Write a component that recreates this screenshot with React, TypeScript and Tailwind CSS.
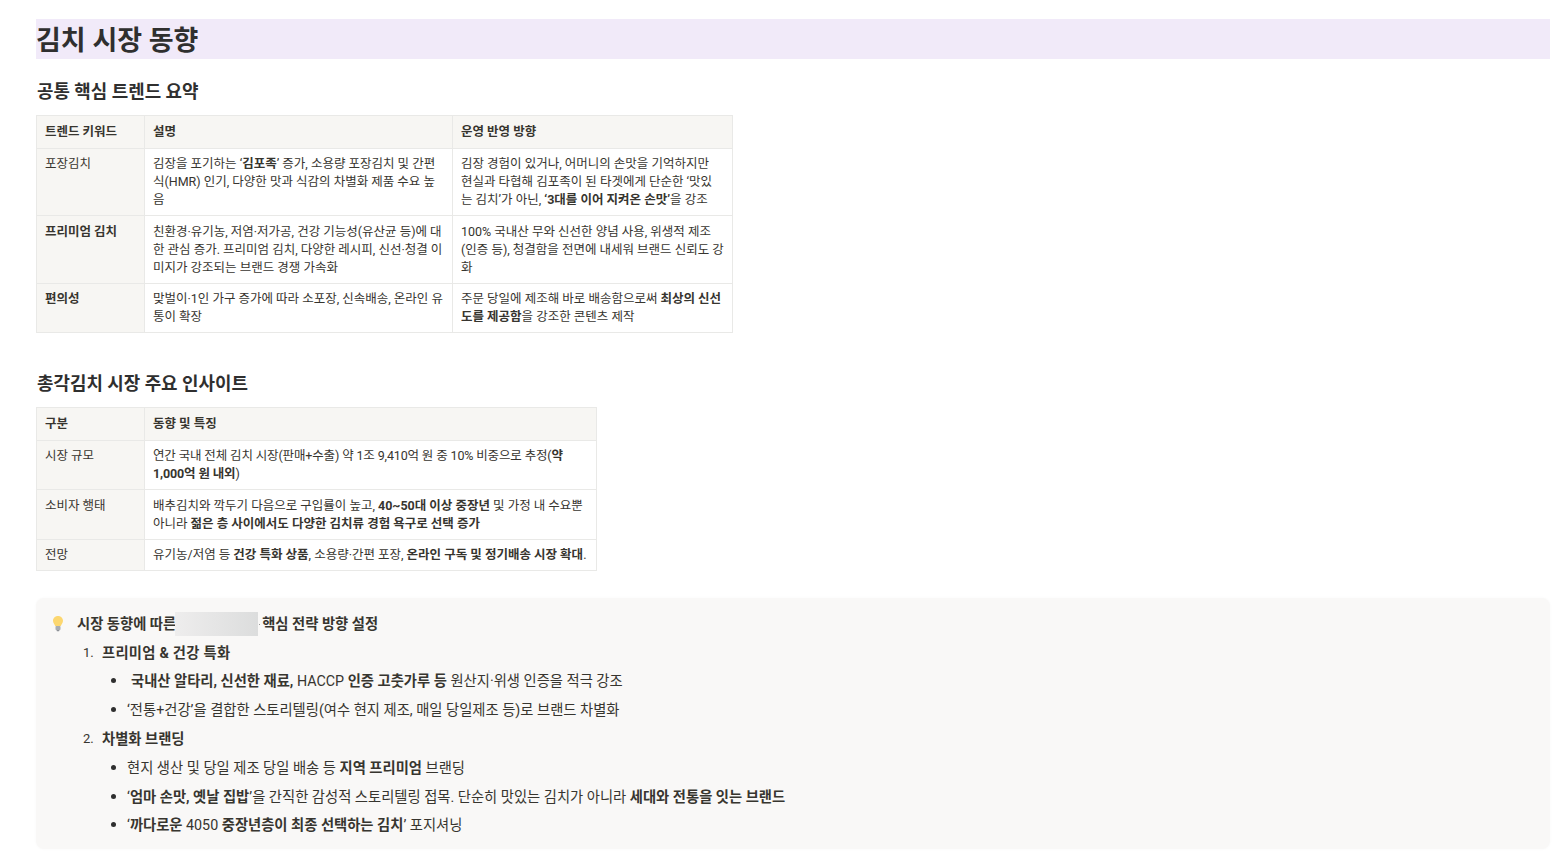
const th = "border border-[#e9e9e7] bg-[#f7f6f3] px-[8px] py-[7px] text-left align-top font-bold";
const td = "border border-[#e9e9e7] px-[8px] py-[6px] align-top font-normal";
const tk = "border border-[#e9e9e7] bg-[#f7f6f3] px-[8px] py-[6px] text-left align-top font-normal";

function Bulb() {
  return (
    <svg width="14" height="18" viewBox="0 0 14 18" className="shrink-0">
      <path d="M7 1C3.9 1 2 3.2 2 5.8c0 2.4 1.6 3.4 2.2 5.2h5.600C10.400 9.200 12 8.200 12 5.800 12 3.200 10.100 1 7 1z" fill="#fcd770" />
      <rect x="4.500" y="11" width="5" height="4" rx="0.800" fill="#a9adb3" />
      <rect x="5.500" y="15" width="3" height="1.200" rx="0.600" fill="#8d9197" />
    </svg>
  );
}

function Li({ children }: { children: React.ReactNode }) {
  return (
    <li className="flex h-[29px] items-center">
      <span className="ml-[60px] mr-[11px] h-[5px] w-[5px] rounded-full bg-[#2f2f2f]" />
      <span>{children}</span>
    </li>
  );
}

export default function App() {
  return (
    <div
      className="h-[856px] overflow-hidden bg-white pl-[36px] pr-[12px] pt-[19px] text-[12.500px] leading-[18px] text-[#37352f]"
      style={{ fontFamily: 'Roboto, "Noto Sans CJK KR", sans-serif' }}
    >
      <h1 className="h-[40px] overflow-hidden bg-[#f1eaf9] text-[27px] font-bold leading-[44px] text-[#2f2f2f]">김치 시장 동향</h1>
      <h2 className="mt-[21px] h-[24px] pl-px text-[17.900px] font-bold leading-[24px] text-[#2f2f2f]">공통 핵심 트렌드 요약</h2>
      <table className="mt-[11px] w-[696px] table-fixed border-collapse">
        <colgroup>
          <col className="w-[108px]" />
          <col className="w-[308px]" />
          <col className="w-[280px]" />
        </colgroup>
        <tbody>
          <tr>
            <th className={th}>트렌드 키워드</th>
            <th className={th}>설명</th>
            <th className={th}>운영 반영 방향</th>
          </tr>
          <tr>
            <th className={tk}>포장김치</th>
            <td className={td}>김장을 포기하는 ‘<b>김포족</b>’ 증가, 소용량 포장김치 및 간편식(HMR) 인기, 다양한 맛과 식감의 차별화 제품 수요 높음</td>
            <td className={td}>김장 경험이 있거나, 어머니의 손맛을 기억하지만<br />현실과 타협해 김포족이 된 타겟에게 단순한 ‘맛있<br />는 김치’가 아닌, <b>‘3대를 이어 지켜온 손맛’</b>을 강조</td>
          </tr>
          <tr className="[&>*]:pt-[7px]">
            <th className={`${tk} !font-bold`}>프리미엄 김치</th>
            <td className={td}>친환경·유기농, 저염·저가공, 건강 기능성(유산균 등)에 대한 관심 증가. 프리미엄 김치, 다양한 레시피, 신선·청결 이미지가 강조되는 브랜드 경쟁 가속화</td>
            <td className={td}>100% 국내산 무와 신선한 양념 사용, 위생적 제조(인증 등), 청결함을 전면에 내세워 브랜드 신뢰도 강화</td>
          </tr>
          <tr>
            <th className={`${tk} !font-bold`}>편의성</th>
            <td className={td}>맞벌이·1인 가구 증가에 따라 소포장, 신속배송, 온라인 유통이 확장</td>
            <td className={td}>주문 당일에 제조해 바로 배송함으로써 <b>최상의 신선도를 제공함</b>을 강조한 콘텐츠 제작</td>
          </tr>
        </tbody>
      </table>

      <h2 className="mt-[39px] h-[24px] pl-px text-[17.900px] font-bold leading-[24px] text-[#2f2f2f]">총각김치 시장 주요 인사이트</h2>
      <table className="mt-[11px] w-[560px] table-fixed border-collapse">
        <colgroup>
          <col className="w-[108px]" />
          <col className="w-[452px]" />
        </colgroup>
        <tbody>
          <tr>
            <th className={th}>구분</th>
            <th className={th}>동향 및 특징</th>
          </tr>
          <tr>
            <th className={tk}>시장 규모</th>
            <td className={`${td} tracking-[-0.14px]`}>연간 국내 전체 김치 시장(판매+수출) 약 1조 9,410억 원 중 10% 비중으로 추정(<b>약 1,000억 원 내외</b>)</td>
          </tr>
          <tr className="[&>*]:pt-[7px]">
            <th className={tk}>소비자 행태</th>
            <td className={td}>배추김치와 깍두기 다음으로 구입률이 높고, <b>40~50대 이상 중장년</b> 및 가정 내 수요뿐 아니라 <b>젊은 층 사이에서도 다양한 김치류 경험 욕구로 선택 증가</b></td>
          </tr>
          <tr className="h-[31px]">
            <th className={tk}>전망</th>
            <td className={td}>유기농/저염 등 <b>건강 특화 상품</b>, 소용량·간편 포장, <b>온라인 구독 및 정기배송 시장 확대</b>.</td>
          </tr>
        </tbody>
      </table>

      <div className="mt-[27px] h-[251px] rounded-[8px] bg-[#f9f8f7] pl-[15px] pt-[13px] text-[14.300px] shadow-[0_0_3px_rgba(0,0,0,0.03)]">
        <div className="flex h-[26px] items-center">
          <Bulb />
          <b className="ml-[12px]">시장 동향에 따른</b>
          <span className="-ml-px h-[24px] w-[83px] bg-gradient-to-r from-[#eeeded] to-[#dcdddd]" />
          <span className="ml-px mr-[2px] h-px w-px bg-[#9a9a9a]" />
          <b>핵심 전략 방향 설정</b>
        </div>
        <ol className="mt-[1px]">
          <li className="flex h-[28px] items-center pt-px">
            <span className="ml-[32px] w-[19px] text-[13px]">1.</span>
            <b className="tracking-[0.25px]">프리미엄 &amp; 건강 특화</b>
          </li>
          <ul>
            <Li><b className="ml-[4px]">국내산 알타리, 신선한 재료,</b> HACCP <b>인증 고춧가루 등</b> 원산지·위생 인증을 적극 강조</Li>
            <Li>‘전통+건강’을 결합한 스토리텔링(여수 현지 제조, 매일 당일제조 등)로 브랜드 차별화</Li>
          </ul>
          <li className="flex h-[29px] items-center">
            <span className="ml-[32px] w-[19px] text-[13px]">2.</span>
            <b>차별화 브랜딩</b>
          </li>
          <ul className="[&>li:last-child]:pb-[2px]">
            <Li>현지 생산 및 당일 제조 당일 배송 등 <b>지역 프리미엄</b> 브랜딩</Li>
            <Li>‘<b>엄마 손맛, 옛날 집밥</b>’을 간직한 감성적 스토리텔링 접목. 단순히 맛있는 김치가 아니라 <b>세대와 전통을 잇는 브랜드</b></Li>
            <Li>‘<b>까다로운</b> 4050 <b>중장년층이 최종 선택하는 김치</b>’ 포지셔닝</Li>
          </ul>
        </ol>
      </div>
    </div>
  );
}
